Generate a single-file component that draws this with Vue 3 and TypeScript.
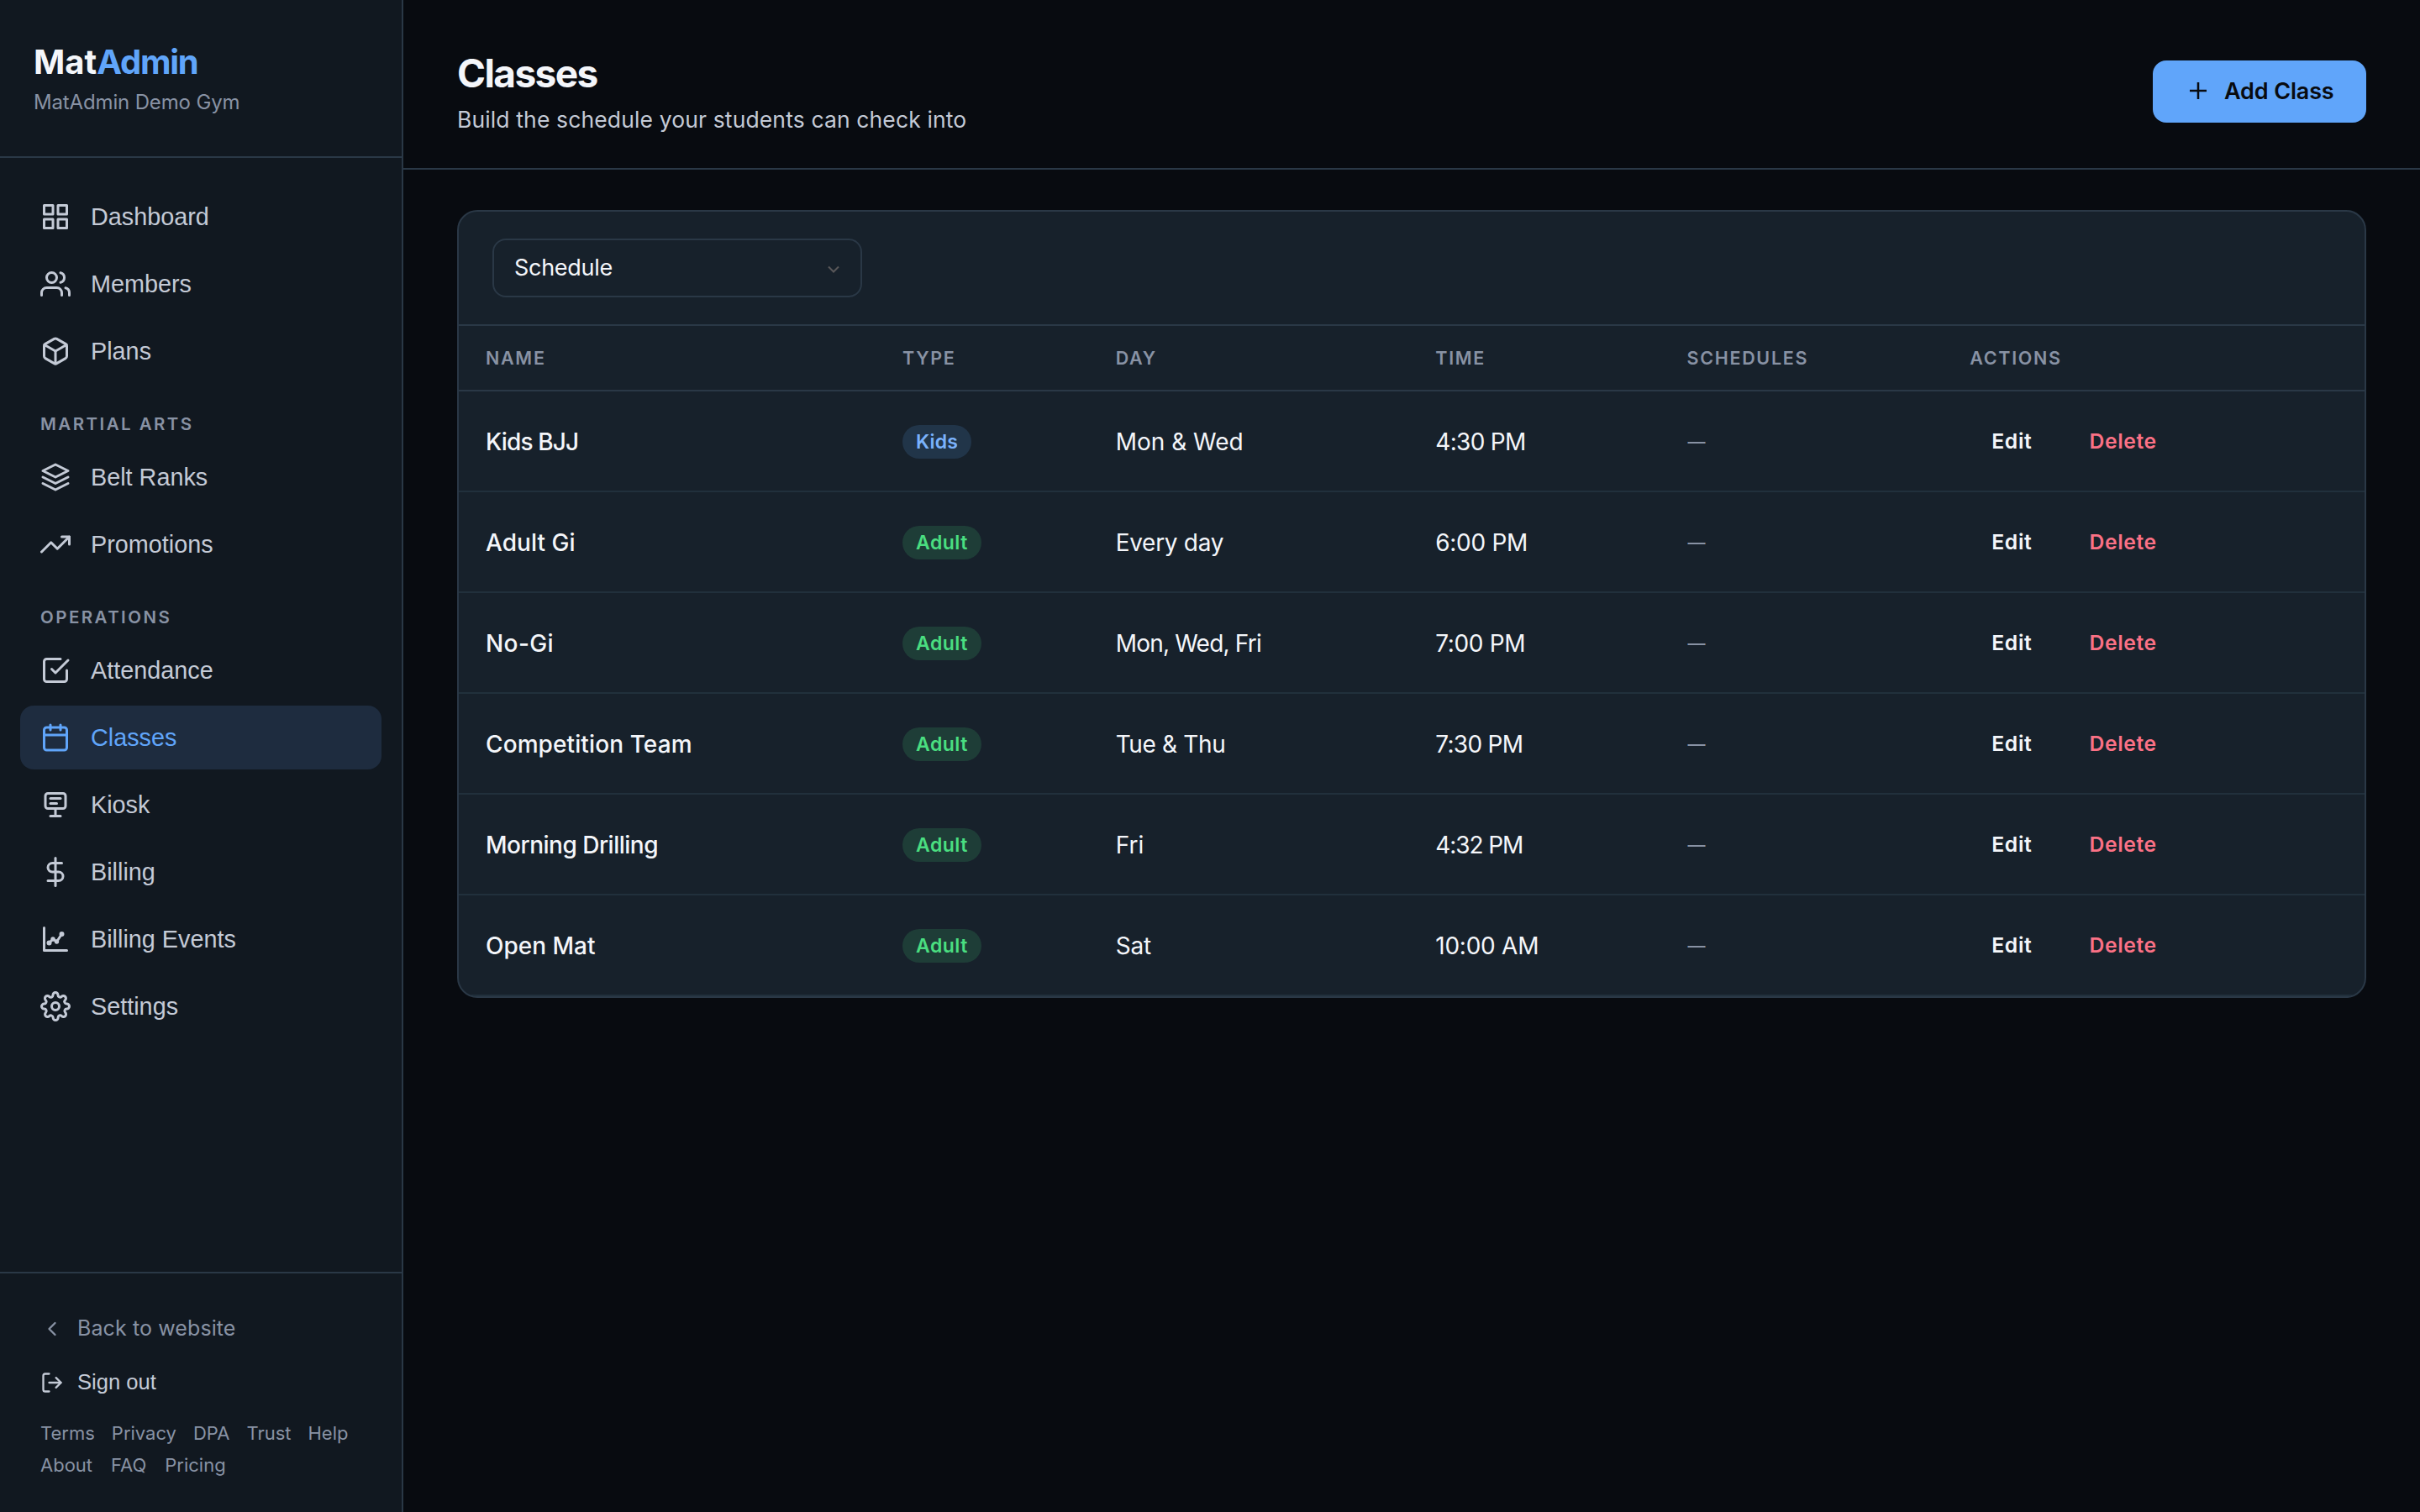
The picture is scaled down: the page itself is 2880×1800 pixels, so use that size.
<script setup lang="ts">
interface NavItem {
  label: string
  icon: string[]
  active?: boolean
}
interface NavGroup {
  title?: string
  items: NavItem[]
}
interface Cell {
  text: string
  tracking: number
}
interface ClassRow {
  name: Cell
  type: 'Kids' | 'Adult'
  day: Cell
  time: Cell
}

const groups: NavGroup[] = [
  {
    items: [
      { label: 'Dashboard', icon: ['M3 3h7v7H3z', 'M14 3h7v7h-7z', 'M14 14h7v7h-7z', 'M3 14h7v7H3z'] },
      {
        label: 'Members',
        icon: [
          'M17 21v-2a4 4 0 0 0-4-4H5a4 4 0 0 0-4 4v2',
          'M9 3a4 4 0 1 0 0 8a4 4 0 1 0 0-8',
          'M23 21v-2a4 4 0 0 0-3-3.87',
          'M16 3.13a4 4 0 0 1 0 7.75',
        ],
      },
      {
        label: 'Plans',
        icon: [
          'M21 16V8a2 2 0 0 0-1-1.73l-7-4a2 2 0 0 0-2 0l-7 4A2 2 0 0 0 3 8v8a2 2 0 0 0 1 1.73l7 4a2 2 0 0 0 2 0l7-4A2 2 0 0 0 21 16z',
          'M3.27 6.96L12 12.01l8.73-5.05',
          'M12 22.08V12',
        ],
      },
    ],
  },
  {
    title: 'Martial Arts',
    items: [
      { label: 'Belt Ranks', icon: ['M12 2L2 7l10 5 10-5-10-5z', 'M2 17l10 5 10-5', 'M2 12l10 5 10-5'] },
      { label: 'Promotions', icon: ['M23 6l-9.5 9.5-5-5L1 18', 'M17 6h6v6'] },
    ],
  },
  {
    title: 'Operations',
    items: [
      {
        label: 'Attendance',
        icon: ['M9 11l3 3L22 4', 'M21 12v7a2 2 0 0 1-2 2H5a2 2 0 0 1-2-2V5a2 2 0 0 1 2-2h11'],
      },
      {
        label: 'Classes',
        active: true,
        icon: [
          'M5 4h14a2 2 0 0 1 2 2v14a2 2 0 0 1-2 2H5a2 2 0 0 1-2-2V6a2 2 0 0 1 2-2z',
          'M16 2v4',
          'M8 2v4',
          'M3 10h18',
        ],
      },
      {
        label: 'Kiosk',
        icon: [
          'M6 3h12a2 2 0 0 1 2 2v8a2 2 0 0 1-2 2H6a2 2 0 0 1-2-2V5a2 2 0 0 1 2-2z',
          'M8 7h8',
          'M8 11h5',
          'M12 15v6',
          'M8 21h8',
        ],
      },
      { label: 'Billing', icon: ['M12 1v22', 'M17 5H9.5a3.5 3.5 0 0 0 0 7h5a3.5 3.5 0 0 1 0 7H6'] },
      {
        label: 'Billing Events',
        icon: [
          'M3 3v18h18',
          'M7 15l3-3 3 2 4-6',
          'M7 14a1 1 0 1 0 0 2a1 1 0 1 0 0-2',
          'M10 11.2a.8 .8 0 1 0 0 1.6a.8 .8 0 1 0 0-1.6',
          'M13 13.2a.8 .8 0 1 0 0 1.6a.8 .8 0 1 0 0-1.6',
          'M17 7a1 1 0 1 0 0 2a1 1 0 1 0 0-2',
        ],
      },
      {
        label: 'Settings',
        icon: [
          'M12 9a3 3 0 1 0 0 6a3 3 0 1 0 0-6',
          'M19.4 15a1.65 1.65 0 0 0 .33 1.82l.06.06a2 2 0 0 1 0 2.83 2 2 0 0 1-2.83 0l-.06-.06a1.65 1.65 0 0 0-1.82-.33 1.65 1.65 0 0 0-1 1.51V21a2 2 0 0 1-2 2 2 2 0 0 1-2-2v-.09A1.65 1.65 0 0 0 9 19.4a1.65 1.65 0 0 0-1.82.33l-.06.06a2 2 0 0 1-2.83 0 2 2 0 0 1 0-2.83l.06-.06a1.65 1.65 0 0 0 .33-1.82 1.65 1.65 0 0 0-1.51-1H3a2 2 0 0 1-2-2 2 2 0 0 1 2-2h.09A1.65 1.65 0 0 0 4.6 9a1.65 1.65 0 0 0-.33-1.82l-.06-.06a2 2 0 0 1 0-2.83 2 2 0 0 1 2.83 0l.06.06a1.65 1.65 0 0 0 1.82.33H9a1.65 1.65 0 0 0 1-1.51V3a2 2 0 0 1 2-2 2 2 0 0 1 2 2v.09a1.65 1.65 0 0 0 1 1.51 1.65 1.65 0 0 0 1.82-.33l.06-.06a2 2 0 0 1 2.83 0 2 2 0 0 1 0 2.83l-.06.06a1.65 1.65 0 0 0-.33 1.82V9a1.65 1.65 0 0 0 1.51 1H21a2 2 0 0 1 2 2 2 2 0 0 1-2 2h-.09a1.65 1.65 0 0 0-1.51 1z',
        ],
      },
    ],
  },
]

const links: string[][] = [
  ['Terms', 'Privacy', 'DPA', 'Trust', 'Help'],
  ['About', 'FAQ', 'Pricing'],
]

const columns: string[] = ['Name', 'Type', 'Day', 'Time', 'Schedules', 'Actions']

const cell = (text: string, tracking = 0): Cell => ({ text, tracking })

const rows: ClassRow[] = [
  { name: cell('Kids BJJ', -0.85), type: 'Kids', day: cell('Mon & Wed'), time: cell('4:30 PM', -0.7) },
  { name: cell('Adult Gi', 0.05), type: 'Adult', day: cell('Every day', -0.3), time: cell('6:00 PM', -0.3) },
  { name: cell('No-Gi', 0.4), type: 'Adult', day: cell('Mon, Wed, Fri', -0.8), time: cell('7:00 PM', -0.35) },
  { name: cell('Competition Team', 0.1), type: 'Adult', day: cell('Tue & Thu', -0.35), time: cell('7:30 PM', -0.7) },
  { name: cell('Morning Drilling', -0.5), type: 'Adult', day: cell('Fri'), time: cell('4:32 PM', -1.1) },
  { name: cell('Open Mat'), type: 'Adult', day: cell('Sat', -0.2), time: cell('10:00 AM', -0.25) },
]
</script>

<template>
  <div class="app">
    <aside class="sidebar">
      <div class="brand">
        <div class="logo">Mat<span>Admin</span></div>
        <div class="gym">MatAdmin Demo Gym</div>
      </div>
      <nav class="nav">
        <div v-for="(group, gi) in groups" :key="gi" class="group">
          <div v-if="group.title" class="group-title">{{ group.title }}</div>
          <a v-for="item in group.items" :key="item.label" class="nav-item" :class="{ active: item.active }">
            <svg viewBox="0 0 24 24" class="nav-icon">
              <path v-for="(d, i) in item.icon" :key="i" :d="d" />
            </svg>
            <span>{{ item.label }}</span>
          </a>
        </div>
      </nav>
      <div class="side-foot">
        <a class="foot-action back">
          <svg viewBox="0 0 24 24"><path d="M15 18l-6-6 6-6" /></svg>
          <span>Back to website</span>
        </a>
        <a class="foot-action signout">
          <svg viewBox="0 0 24 24">
            <path d="M9 21H5a2 2 0 0 1-2-2V5a2 2 0 0 1 2-2h4" />
            <path d="M16 17l5-5-5-5" />
            <path d="M21 12H9" />
          </svg>
          <span>Sign out</span>
        </a>
        <div class="link-block">
          <div v-for="(line, i) in links" :key="i" class="links">
            <a v-for="l in line" :key="l">{{ l }}</a>
          </div>
        </div>
      </div>
    </aside>

    <main class="main">
      <header class="head">
        <div>
          <h1>Classes</h1>
          <p>Build the schedule your students can check into</p>
        </div>
        <button class="add">
          <svg viewBox="0 0 24 24"><path d="M12 4.5v15M4.5 12h15" /></svg>
          <span>Add Class</span>
        </button>
      </header>
      <section class="card">
        <div class="toolbar">
          <div class="select">
            <span>Schedule</span>
            <svg viewBox="0 0 16 10"><path d="M2 1.5l6 6 6-6" /></svg>
          </div>
        </div>
        <div class="row thead">
          <div v-for="c in columns" :key="c">{{ c }}</div>
        </div>
        <div v-for="r in rows" :key="r.name.text" class="row">
          <div class="cell name" :style="{ letterSpacing: r.name.tracking + 'px' }">{{ r.name.text }}</div>
          <div class="cell">
            <span class="badge" :class="r.type.toLowerCase()">{{ r.type }}</span>
          </div>
          <div class="cell" :style="{ letterSpacing: r.day.tracking + 'px' }">{{ r.day.text }}</div>
          <div class="cell" :style="{ letterSpacing: r.time.tracking + 'px' }">{{ r.time.text }}</div>
          <div class="none">—</div>
          <div class="actions">
            <button>Edit</button>
            <button class="danger">Delete</button>
          </div>
        </div>
      </section>
    </main>
  </div>
</template>

<style>
html,
body {
  margin: 0;
  background: #080b10;
}
</style>

<style scoped>
.app {
  display: flex;
  width: 2880px;
  height: 1800px;
  overflow: hidden;
  background: #080b10;
  color: #f4f6fa;
  font-family: Inter, "Liberation Sans", sans-serif;
}
svg {
  display: block;
  flex: none;
  fill: none;
  stroke: currentColor;
  stroke-width: 2;
  stroke-linecap: round;
  stroke-linejoin: round;
}
.sidebar {
  box-sizing: border-box;
  display: flex;
  flex-direction: column;
  flex: none;
  width: 480px;
  height: 1800px;
  background: #111820;
  border-right: 2px solid #2a3846;
}
.brand {
  box-sizing: border-box;
  height: 188px;
  padding: 48px 40px 0;
  border-bottom: 2px solid #2a3846;
}
.logo {
  font-size: 40px;
  line-height: 52px;
  font-weight: 700;
}
.logo span {
  color: #60a5fa;
  letter-spacing: -1.2px;
}
.gym {
  margin-top: 6px;
  font-size: 24px;
  line-height: 32px;
  letter-spacing: -0.15px;
  color: #8892a4;
}
.nav {
  flex: 1;
  padding: 32px 24px 0;
}
.group-title {
  height: 70px;
  padding: 0 24px;
  line-height: 89px;
  font-size: 20.5px;
  font-weight: 600;
  letter-spacing: 2.45px;
  text-transform: uppercase;
  color: #8892a4;
}
.nav-item {
  display: flex;
  align-items: center;
  gap: 24px;
  height: 76px;
  margin-bottom: 4px;
  padding: 0 24px;
  border-radius: 16px;
  font-family: "Liberation Sans", Arial, sans-serif;
  font-size: 28.8px;
  color: #c4cad6;
}
.nav-item.active {
  background: #1e2c3f;
  color: #60a5fa;
}
.nav-icon {
  width: 36px;
  height: 36px;
}
.side-foot {
  box-sizing: border-box;
  height: 286px;
  padding: 34px 48px 0;
  border-top: 2px solid #2a3846;
}
.foot-action {
  display: flex;
  align-items: center;
  gap: 16px;
  height: 64px;
}
.foot-action svg {
  width: 28px;
  height: 28px;
}
.foot-action span {
  margin-bottom: 2px;
}
.back {
  font-size: 25px;
  letter-spacing: 0.1px;
  color: #8892a4;
}
.signout {
  font-family: "Liberation Sans", Arial, sans-serif;
  font-size: 25.6px;
  color: #c4cad6;
}
.link-block {
  margin-top: 9px;
}
.links {
  display: flex;
  gap: 20px;
  height: 38px;
  line-height: 38px;
  font-size: 22px;
  color: #8892a4;
}
.links + .links {
  gap: 22px;
}
.main {
  flex: 1;
  min-width: 0;
}
.head {
  box-sizing: border-box;
  display: flex;
  justify-content: space-between;
  height: 202px;
  padding: 56px 64px 0;
  border-bottom: 2px solid #2a3846;
}
h1 {
  margin: 0;
  font-size: 46px;
  line-height: 62px;
  font-weight: 700;
  letter-spacing: -1.6px;
}
p {
  margin: 5px 0 0;
  font-size: 26.5px;
  line-height: 38px;
  letter-spacing: 0.13px;
  color: #c4cad6;
}
button {
  border: 0;
  background: none;
  color: inherit;
  font-family: inherit;
}
.add {
  box-sizing: border-box;
  display: flex;
  align-items: center;
  gap: 15px;
  width: 254px;
  height: 74px;
  margin-top: 16px;
  padding: 0 0 2px 38px;
  border-radius: 16px;
  background: #60a5fa;
  color: #080b10;
  font-size: 27px;
  font-weight: 600;
  letter-spacing: -0.15px;
}
.add svg {
  width: 32px;
  height: 32px;
  stroke-width: 1.9;
  stroke-linecap: butt;
}
.card {
  margin: 48px 64px 0;
  border: 2px solid #2a3846;
  border-radius: 24px;
  background: #17212b;
  overflow: hidden;
}
.toolbar {
  padding: 32px 40px;
  border-bottom: 2px solid #2a3846;
}
.select {
  box-sizing: border-box;
  display: flex;
  align-items: center;
  justify-content: space-between;
  width: 440px;
  height: 70px;
  padding: 0 24px;
  border: 2px solid #2a3846;
  border-radius: 16px;
  font-size: 27px;
  letter-spacing: -0.3px;
}
.select span {
  margin-bottom: 2px;
}
.select svg {
  width: 16px;
  height: 10px;
  margin-top: 3px;
  color: #595759;
  stroke-linecap: butt;
  stroke-linejoin: miter;
}
.row {
  box-sizing: border-box;
  display: grid;
  grid-template-columns: 496px 253.7px 380.6px 299.2px 336.8px 1fr;
  align-items: center;
  height: 120px;
  padding-left: 32px;
  border-bottom: 2px solid #21303c;
  font-size: 28px;
}
.thead {
  height: 78px;
  border-bottom-color: #2a3846;
  color: #8892a4;
  font-size: 21.5px;
  font-weight: 600;
  letter-spacing: 1.7px;
  text-transform: uppercase;
}
.cell {
  padding-top: 2px;
}
.name {
  font-weight: 500;
}
.none {
  padding-left: 1px;
  font-size: 21px;
  font-weight: 500;
  color: #8892a4;
}
.badge {
  display: inline-flex;
  align-items: center;
  height: 40px;
  padding: 0 16px;
  border-radius: 20px;
  font-size: 23px;
  font-weight: 600;
}
.kids {
  color: #7ab2fc;
  background: rgba(96, 165, 250, 0.15);
  letter-spacing: 0.15px;
}
.adult {
  color: #4ade80;
  background: rgba(74, 222, 128, 0.15);
  letter-spacing: 0.5px;
}
.actions {
  display: flex;
  gap: 16px;
}
.actions button {
  padding: 0 26px;
  font-size: 24.7px;
  font-weight: 600;
  letter-spacing: 0.65px;
}
.actions .danger {
  color: #fb7185;
}
</style>
